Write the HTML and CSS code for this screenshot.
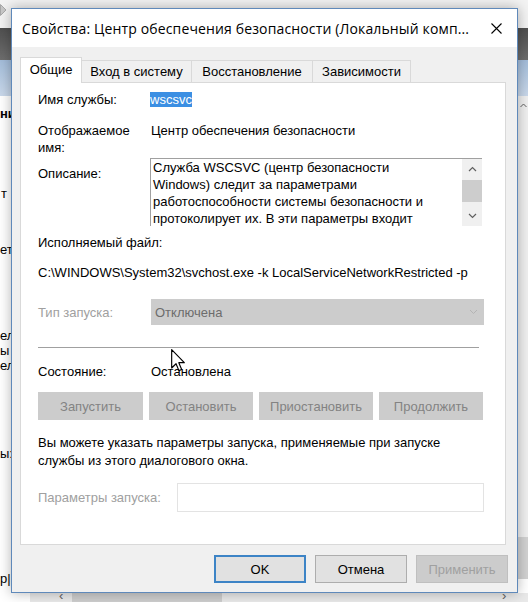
FILE: index.html
```html
<!DOCTYPE html>
<html lang="ru">
<head>
<meta charset="utf-8">
<title>Свойства: Центр обеспечения безопасности</title>
<link rel="stylesheet" href="styles.css">
</head>
<body>
<div class="desktop">
  <div class="bgwin">
    <div class="bg-top"><svg class="bg-tri" width="7" height="12" viewBox="0 0 7 12"><path d="M0.5 0.5 L6 6 L0.5 11.5 Z" fill="#c8c8c8" stroke="#a8a8a8"/></svg></div>
    <div class="bg-dark"></div>
    <div class="bg-blue"></div>
    <div class="frag f1 bold">ни</div>
    <div class="frag f2">т</div>
    <div class="frag f3">ет</div>
    <div class="frag f4">ел</div>
    <div class="frag f5">ы</div>
    <div class="frag f6">ел</div>
    <div class="frag f7">ы:</div>
    <div class="frag f8">р|</div>
    <div class="bg-rcol"><svg class="rchev" width="7" height="5" viewBox="0 0 7 5"><path d="M0.5 4 L3.5 1 L6.5 4" fill="none" stroke="#606060"/></svg></div>
    <div class="bg-rblock"></div>
    <div class="bg-hbar">
      <span class="hchev">‹</span>
      <div class="hthumb"></div>
      <span class="hchev r">›</span>
    </div>
  </div>

  <div class="dialog">
    <div class="titlebar">
      <div class="title">Свойства: Центр обеспечения безопасности (Локальный комп...</div>
      <div class="close"><svg width="11" height="11" viewBox="0 0 11 11"><path d="M0.5 0.5 L10.5 10.5 M10.5 0.5 L0.5 10.5" stroke="#000" stroke-width="1.1"/></svg></div>
    </div>
    <div class="dlg-body">
      <div class="tabs">
        <div class="tab active t1">Общие</div>
        <div class="tab t2">Вход в систему</div>
        <div class="tab t3">Восстановление</div>
        <div class="tab t4">Зависимости</div>
      </div>
      <div class="panel">
        <div class="row r-name">
          <div class="lbl">Имя службы:</div>
          <div class="val"><span class="sel">wscsvc</span></div>
        </div>
        <div class="row r-disp">
          <div class="lbl">Отображаемое<br>имя:</div>
          <div class="val v-pad">Центр обеспечения безопасности</div>
        </div>
        <div class="row r-desc">
          <div class="lbl lbl-desc">Описание:</div>
          <div class="descbox">
            <div class="desctext">Служба WSCSVC (центр безопасности<br>Windows) следит за параметрами<br>работоспособности системы безопасности и<br>протоколирует их. В эти параметры входит</div>
            <div class="vscroll">
              <div class="sb-btn"><svg width="9" height="6" viewBox="0 0 9 6"><path d="M1 5 L4.5 1.5 L8 5" fill="none" stroke="#606060" stroke-width="1.2"/></svg></div>
              <div class="sb-track"><div class="sb-thumb"></div></div>
              <div class="sb-btn"><svg width="9" height="6" viewBox="0 0 9 6"><path d="M1 1 L4.5 4.5 L8 1" fill="none" stroke="#606060" stroke-width="1.2"/></svg></div>
            </div>
          </div>
        </div>
        <div class="exe-lbl">Исполняемый файл:</div>
        <div class="exe-path">C:\WINDOWS\System32\svchost.exe -k LocalServiceNetworkRestricted -p</div>
        <div class="row r-type">
          <div class="lbl dis">Тип запуска:</div>
          <div class="combo"><span>Отключена</span><svg width="9" height="6" viewBox="0 0 9 6"><path d="M1 1 L4.5 4.5 L8 1" fill="none" stroke="#b4b4b4" stroke-width="1"/></svg></div>
        </div>
        <div class="sep"></div>
        <div class="row r-state">
          <div class="lbl">Состояние:</div>
          <div class="val v-pad">Остановлена</div>
        </div>
        <div class="svc-btns">
          <button class="sbtn w105" disabled>Запустить</button>
          <button class="sbtn w104" disabled>Остановить</button>
          <button class="sbtn w114" disabled>Приостановить</button>
          <button class="sbtn w104" disabled>Продолжить</button>
        </div>
        <p class="hint">Вы можете указать параметры запуска, применяемые при запуске<br>службы из этого диалогового окна.</p>
        <div class="row r-params">
          <div class="lbl dis lbl-params">Параметры запуска:</div>
          <div class="input"></div>
        </div>
      </div>
      <div class="footer">
        <button class="btn ok">OK</button>
        <button class="btn">Отмена</button>
        <button class="btn apply" disabled>Применить</button>
      </div>
    </div>
  </div>

  <svg class="cursor" width="14" height="23" viewBox="0 0 12 20"><path d="M0.5 0.5 L0.5 16.5 L4.3 12.8 L6.8 18.8 L9.2 17.8 L6.7 11.9 L11.5 11.9 Z" fill="#fff" stroke="#000" stroke-width="1" stroke-linejoin="round"/></svg>
</div>
</body>
</html>
```

FILE: styles.css
```css
* { box-sizing: border-box; }
html, body { margin: 0; padding: 0; }
body {
  width: 528px;
  height: 602px;
  overflow: hidden;
  font-family: "Liberation Sans", Arial, sans-serif;
  font-size: 13px;
  color: #000;
}
.desktop {
  position: relative;
  width: 528px;
  height: 602px;
  overflow: hidden;
  background: #ffffff;
}

/* background window (MMC services list behind the dialog) */
.bgwin { position: absolute; inset: 0; background: #fff; }
.bg-top { position: absolute; left: 0; top: 0; width: 528px; height: 28px; background: #f3f3f3; }
.bg-tri { position: absolute; left: 0; top: 4px; }
.bg-dark { position: absolute; left: 0; top: 28px; width: 528px; height: 32px; background: linear-gradient(#4f4f4f, #6e6e6e); }
.bg-blue { position: absolute; left: 0; top: 60px; width: 528px; height: 36px; background: linear-gradient(#a3bcd9, #c9d8ea); }
.frag { position: absolute; left: 0; font-size: 13px; line-height: 15px; white-space: nowrap; color: #000; }
.frag.bold { font-weight: bold; }
.f1 { top: 106px; }
.f2 { top: 186px; left: 1px; }
.f3 { top: 242px; }
.f4 { top: 328px; }
.f5 { top: 343px; }
.f6 { top: 358px; }
.f7 { top: 446px; }
.f8 { top: 571px; }
.bg-rcol { position: absolute; left: 518px; top: 96px; width: 10px; height: 441px; background: #f0f0f0; }
.rchev { position: absolute; left: 2px; top: 7px; }
.bg-rblock { position: absolute; left: 518px; top: 537px; width: 10px; height: 42px; background: #d2d2d2; }
.bg-hbar { position: absolute; left: 30px; top: 593px; width: 498px; height: 9px; background: #e9e9e9; }
.hchev { position: absolute; left: 29px; top: -5px; font-size: 13px; color: #606060; }
.hchev.r { left: 472px; }
.hthumb { position: absolute; left: 42px; top: 0; width: 150px; height: 9px; background: #cdcdcd; }

/* dialog */
.dialog {
  position: absolute;
  left: 11px;
  top: 8px;
  width: 507px;
  height: 585px;
  border: 1px solid #5f89ba;
  background: #f0f0f0;
  display: flex;
  flex-direction: column;
  box-shadow: 0 0 12px rgba(0, 0, 0, 0.3);
}
.titlebar {
  flex: none;
  height: 38px;
  background: #fff;
  display: flex;
  align-items: center;
  justify-content: space-between;
  padding-left: 10px;
}
.title {
  font-family: "Open Sans", "Noto Sans", sans-serif;
  font-size: 14px;
  letter-spacing: 0.14px;
  white-space: nowrap;
  color: #000;
}
.close {
  width: 42px;
  height: 38px;
  display: flex;
  align-items: center;
  justify-content: center;
}
.dlg-body {
  flex: 1;
  padding: 10px 11px 9px 8px;
  display: flex;
  flex-direction: column;
}

/* tabs */
.tabs {
  flex: none;
  display: flex;
  align-items: flex-end;
  height: 25px;
  position: relative;
  z-index: 1;
}
.tab {
  height: 22px;
  line-height: 21px;
  text-align: center;
  border: 1px solid #d9d9d9;
  border-bottom: none;
  background: #f0f0f0;
  white-space: nowrap;
}
.tab + .tab { border-left: none; }
.tab.active {
  height: 26px;
  line-height: 23px;
  margin-bottom: -1px;
  background: #fff;
  border-color: #d9d9d9;
}
.t1 { width: 62px; }
.t2 { width: 110px; }
.t3 { width: 121px; }
.t4 { width: 98px; }

/* panel */
.panel {
  flex: none;
  height: 463px;
  background: #fff;
  border: 1px solid #d9d9d9;
  padding: 8px 21px 0 17px;
}
.row { display: flex; }
.lbl { width: 112px; flex: none; line-height: 17px; }
.val { line-height: 17px; }
.v-pad { padding-left: 1px; }
.sel { background: #3b8fe3; color: #fff; }
.r-disp { margin-top: 14px; }
.r-desc { margin-top: 2px; }
.lbl-desc { margin-top: 7px; }
.descbox {
  width: 332px;
  height: 68px;
  border-top: 1px solid #a0a0a0;
  border-left: 1px solid #a0a0a0;
  background: #fff;
  display: flex;
}
.desctext {
  flex: 1;
  padding-left: 2px;
  line-height: 17px;
  overflow: hidden;
  white-space: nowrap;
}
.vscroll {
  width: 20px;
  flex: none;
  display: flex;
  flex-direction: column;
  background: #f0f0f0;
}
.sb-btn {
  height: 20px;
  display: flex;
  align-items: center;
  justify-content: center;
}
.sb-track { flex: 1; padding-top: 1px; }
.sb-thumb { height: 22px; background: #cdcdcd; }

.exe-lbl { margin-top: 8px; line-height: 17px; }
.exe-path { margin-top: 13px; line-height: 17px; white-space: nowrap; }
.r-type { margin-top: 18px; align-items: center; }
.dis { color: #a0a0a0; }
.combo {
  margin-left: 1px;
  width: 333px;
  height: 26px;
  background: #cccccc;
  color: #6d6d6d;
  display: flex;
  align-items: center;
  justify-content: space-between;
  padding: 0 6px 0 4px;
}
.sep { margin-top: 22px; width: 441px; height: 1px; background: #a0a0a0; }
.r-state { margin-top: 15px; }
.svc-btns { margin-top: 12px; display: flex; gap: 6px; }
.sbtn {
  height: 28px;
  font: inherit;
  background: #cccccc;
  border: 1px solid #cccccc;
  color: #838383;
  padding: 0;
}
.w105 { width: 105px; }
.w104 { width: 104px; }
.w114 { width: 114px; }
.hint { margin: 14px 0 0; line-height: 18px; }
.r-params { margin-top: 13px; align-items: center; }
.lbl-params { width: 139px; }
.input {
  width: 307px;
  height: 29px;
  border: 1px solid #e3e3e3;
  background: #fff;
}

/* footer buttons */
.footer {
  flex: none;
  margin-top: 10px;
  margin-right: -2px;
  height: 28px;
  display: flex;
  justify-content: flex-end;
  gap: 9px;
}
.btn {
  width: 92px;
  height: 28px;
  font: inherit;
  font-size: 13px;
  background: #e1e1e1;
  border: 1px solid #adadad;
  color: #000;
  padding: 0;
}
.btn.ok { border: 2px solid #3d84c6; }
.btn.apply { background: #cccccc; border-color: #bfbfbf; color: #a0a0a0; }

.cursor { position: absolute; left: 171px; top: 349px; }
```
